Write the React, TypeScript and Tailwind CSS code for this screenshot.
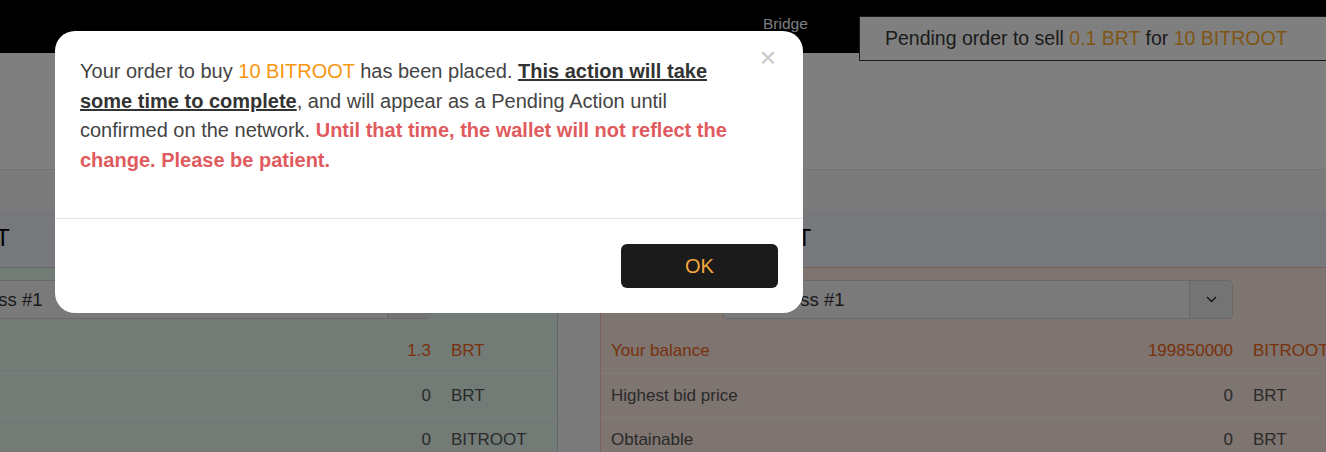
import React from 'react';

const rowsLeft = [
  { label: 'Your balance', value: '1.3', unit: 'BRT', hot: true },
  { label: 'Lowest ask price', value: '0', unit: 'BRT', hot: false },
  { label: 'Obtainable', value: '0', unit: 'BITROOT', hot: false },
];

const rowsRight = [
  { label: 'Your balance', value: '199850000', unit: 'BITROOT', hot: true },
  { label: 'Highest bid price', value: '0', unit: 'BRT', hot: false },
  { label: 'Obtainable', value: '0', unit: 'BRT', hot: false },
];

const Chevron = () => (
  <svg width="11" height="7" viewBox="0 0 11 7" fill="none" stroke="#222" strokeWidth="1.3">
    <path d="M1 1l4.5 4.5L10 1" />
  </svg>
);

const Panel = ({ tone, rows }: { tone: 'green' | 'orange'; rows: typeof rowsLeft }) => {
  const box =
    tone === 'green'
      ? 'bg-[#e6f6ee] border-[#bed4d0]'
      : 'bg-[#fce8e0] border-[#f0c4b6]';
  return (
    <div className={`w-[760px] h-full border pt-[12px] ${box}`}>
      <div className="flex items-center pl-[10px] h-[39px]">
        <div className="w-[111px] text-[17px] text-[#555]">From</div>
        <div className="flex w-[511px] h-[39px] rounded-[5px] border border-[#d0d0d0] bg-[#f5f5f5]">
          <div className="flex-1 flex items-center pl-[28px] text-[18.5px] text-[#333]">Address #1</div>
          <div className="w-[43px] flex items-center justify-center border-l border-[#d0d0d0] bg-[#e8e8e8] rounded-r-[5px]">
            <Chevron />
          </div>
        </div>
      </div>
      <div className="mt-[10px]">
        {rows.map((r, i) => (
          <div
            key={r.label}
            className={`flex items-center h-[44px] pl-[10px] text-[17px] ${i > 0 ? 'border-t border-white/70' : ''} ${r.hot ? 'text-[#f26416]' : 'text-[#555]'}`}
          >
            <div className="flex-1">{r.label}</div>
            <div className="w-[200px] text-right">{r.value}</div>
            <div className="w-[126px] pl-[20px]">{r.unit}</div>
          </div>
        ))}
      </div>
    </div>
  );
};

export default function App() {
  return (
    <div
      className="relative w-[1326px] h-[452px] overflow-hidden bg-white"
      style={{ fontFamily: '"Liberation Sans", Arial, sans-serif' }}
    >
      {/* navbar */}
      <div className="flex items-start h-[53px] bg-black">
        <div className="ml-[763px] mt-[12px] text-[15.5px] text-[#f2f8ff]">Bridge</div>
      </div>

      {/* page header */}
      <div className="h-[117px] border-b border-[#e8e8e8] bg-white" />
      <div className="h-[40px] bg-[#f7f7f7]" />

      {/* exchange columns, page scrolled sideways */}
      <div className="-ml-[202px] w-[1562px]">
        <div className="flex gap-[42px] h-[57px] bg-[#eef1f6]">
          <div className="w-[760px] pl-[5px] flex items-center text-[23px] text-black">Exchange Your BRT</div>
          <div className="w-[760px] pl-[12px] flex items-center text-[23px] text-black">Sell Your BITROOT</div>
        </div>
        <div className="flex gap-[42px] h-[200px] bg-[#f4f4f4]">
          <Panel tone="green" rows={rowsLeft} />
          <Panel tone="orange" rows={rowsRight} />
        </div>
      </div>

      {/* pending toast */}
      <div className="absolute top-[16px] left-[859px] w-[520px] h-[45px] flex items-center pl-[25px] border border-[#333] bg-white text-[19.5px] text-[#383838]">
        <span>
          Pending order to sell <span className="text-[#ffad2e]">0.1 BRT</span> for{' '}
          <span className="text-[#ffad2e]">10 BITROOT</span>
        </span>
      </div>

      {/* modal */}
      <div className="absolute inset-0 bg-black/50 pl-[55px] pt-[31px]">
        <div className="relative w-[748px] h-[282px] rounded-[20px] bg-white">
          <button className="absolute right-[27px] top-[13px] text-[28px] leading-none text-[#c8c8c8]">×</button>
          <div className="pl-[25px] pr-[45px] pt-[26px] h-[188px] border-b border-[#e5e5e5]">
            <p className="text-[20px] leading-[29.5px] text-[#444]">
              Your order to buy <span className="text-[#f7960f]">10 BITROOT</span> has been placed.{' '}
              <span className="font-bold underline text-[#333]">This action will take some time to complete</span>, and
              will appear as a Pending Action until confirmed on the network.{' '}
              <span className="font-bold text-[#df5b5e]">Until that time, the wallet will not reflect the change. Please be patient.</span>
            </p>
          </div>
          <div className="flex justify-end pt-[25px] pr-[25px]">
            <button className="w-[157px] h-[44px] rounded-[6px] bg-[#1b1b1b] text-[20px] text-[#f5a83a]">OK</button>
          </div>
        </div>
      </div>
    </div>
  );
}
